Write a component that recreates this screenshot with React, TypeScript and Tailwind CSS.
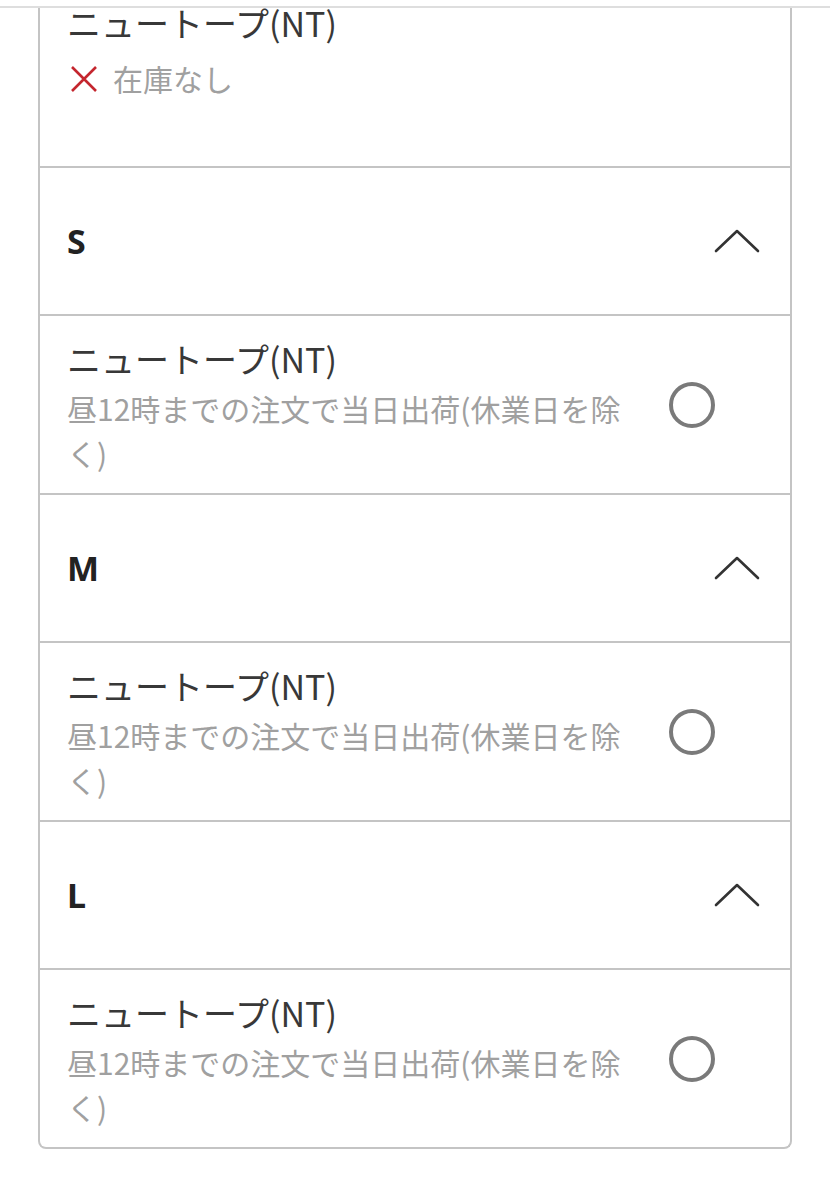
import React from 'react';

const font = { fontFamily: '"Noto Sans CJK JP", "Noto Sans", sans-serif' };

function Chevron() {
  return (
    <svg width="46" height="26" viewBox="0 0 46 26" fill="none">
      <polyline points="2,23 23,3 44,23" stroke="#333" strokeWidth="2.6" strokeLinecap="round" strokeLinejoin="round" />
    </svg>
  );
}

function SizeHeader({ label }: { label: string }) {
  return (
    <div className="flex h-[148px] items-center justify-between border-t-2 border-[#c4c4c4] pl-[27px] pr-[30px]">
      <span className="text-[34px] font-bold text-[#222]" style={{ fontFamily: '"Noto Sans", sans-serif' }}>
        {label}
      </span>
      <Chevron />
    </div>
  );
}

function ItemRow() {
  return (
    <div className="flex h-[179px] items-center border-t-2 border-[#c4c4c4] pl-[27px] pr-[75px]">
      <div className="flex-1 pr-[26px] pt-[2px]">
        <div className="text-[34px] leading-[48px] text-[#383838]">ニュートープ(NT)</div>
        <div className="mt-[3px] text-[30px] leading-[45px] text-[#a0a0a0]">
          昼12時までの注文で当日出荷(休業日を除く)
        </div>
      </div>
      <div className="h-[46px] w-[46px] shrink-0 rounded-full border-4 border-[#7a7a7a]" />
    </div>
  );
}

export default function App() {
  return (
    <div className="h-[1178px] overflow-hidden bg-white" style={font}>
      <div className="h-[8px] border-b-2 border-[#dedede] bg-white" />
      <div className="ml-[38px] w-[754px] overflow-hidden rounded-b-[8px] border-2 border-t-0 border-[#c4c4c4]">
        {/* sold out row, top cut off */}
        <div className="h-[158px] overflow-hidden pl-[27px]">
          <div className="-mt-[9px] text-[34px] leading-[48px] text-[#383838]">ニュートープ(NT)</div>
          <div className="mt-[9px] flex items-center text-[30px] leading-[45px] text-[#a0a0a0]">
            <svg width="28" height="28" viewBox="0 0 28 28" className="ml-[3px] mr-[15px]">
              <path d="M2 2 L26 26 M26 2 L2 26" stroke="#c4262e" strokeWidth="2.6" />
            </svg>
            在庫なし
          </div>
        </div>
        <SizeHeader label="S" />
        <ItemRow />
        <SizeHeader label="M" />
        <ItemRow />
        <SizeHeader label="L" />
        <ItemRow />
      </div>
    </div>
  );
}
